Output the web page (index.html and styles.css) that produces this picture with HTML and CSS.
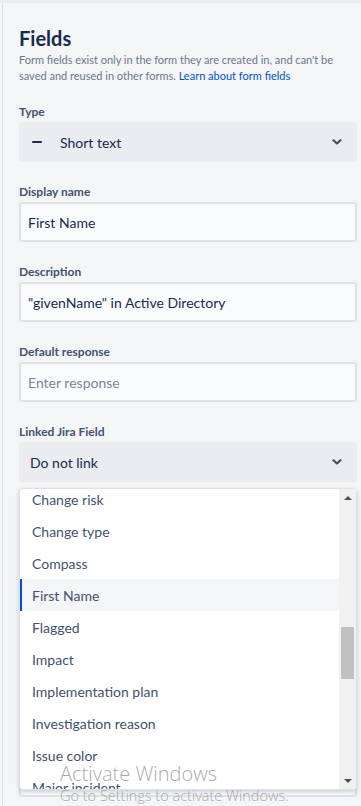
FILE: index.html
```html
<!DOCTYPE html>
<html lang="en">
<head>
<meta charset="utf-8">
<title>Fields</title>
<link rel="stylesheet" href="styles.css">
</head>
<body>
<div class="topbar"></div>
<div class="panel">
  <h1 class="title">Fields</h1>
  <p class="intro">Form fields exist only in the form they are created in, and can't be saved and reused in other forms. <a href="#" class="link">Learn about form fields</a></p>

  <div class="field">
    <div class="label">Type</div>
    <div class="select">
      <span class="minus"></span>
      <span class="select-text type-text">Short text</span>
      <svg class="chev" width="10" height="6" viewBox="0 0 10 6"><path d="M1.5 1.2 L5 4.5 L8.5 1.2" fill="none" stroke="#42526e" stroke-width="2.2" stroke-linecap="round" stroke-linejoin="round"/></svg>
    </div>
  </div>

  <div class="field">
    <div class="label">Display name</div>
    <div class="input">First Name</div>
  </div>

  <div class="field">
    <div class="label">Description</div>
    <div class="input">"givenName" in Active Directory</div>
  </div>

  <div class="field">
    <div class="label">Default response</div>
    <div class="input placeholder">Enter response</div>
  </div>

  <div class="field linked">
    <div class="label">Linked Jira Field</div>
    <div class="select">
      <span class="select-text">Do not link</span>
      <svg class="chev" width="10" height="6" viewBox="0 0 10 6"><path d="M1.5 1.2 L5 4.5 L8.5 1.2" fill="none" stroke="#42526e" stroke-width="2.2" stroke-linecap="round" stroke-linejoin="round"/></svg>
    </div>
    <div class="menu">
      <div class="menu-list">
        <div class="menu-items">
          <div class="item">Change risk</div>
          <div class="item">Change type</div>
          <div class="item">Compass</div>
          <div class="item selected">First Name</div>
          <div class="item">Flagged</div>
          <div class="item">Impact</div>
          <div class="item">Implementation plan</div>
          <div class="item">Investigation reason</div>
          <div class="item">Issue color</div>
          <div class="item">Major incident</div>
        </div>
      </div>
      <div class="scrollbar">
        <div class="arrow up"></div>
        <div class="track"><div class="thumb"></div></div>
        <div class="arrow down"></div>
      </div>
    </div>
  </div>

  <div class="hidden-gap"></div>
  <div class="input behind"></div>
</div>

<div class="watermark">
  <div class="wm-big">Activate Windows</div>
  <div class="wm-small">Go to Settings to activate Windows.</div>
</div>
</body>
</html>
```

FILE: styles.css
```css
html, body {
  margin: 0;
  padding: 0;
  background: #f4f5f7;
  font-family: "Lato", "Noto Sans", sans-serif;
  color: #172b4d;
  overflow: hidden;
  height: 806px;
}

.topbar {
  height: 3px;
  background: #ebecf0;
}

.panel {
  position: relative;
  margin-left: 2px;
  border-left: 1px solid #dfe1e6;
  padding: 23px 4px 0 16px;
  height: 803px;
  box-sizing: border-box;
}

.title {
  margin: 0;
  font-size: 20px;
  line-height: 24px;
  font-weight: 700;
  color: #172b4d;
}

.intro {
  margin: 2px 0 0 0;
  font-size: 11px;
  line-height: 16px;
  color: #6b778c;
}

.link {
  color: #0052cc;
  text-decoration: none;
}

.field {
  margin-top: 18px;
}

.field + .field {
  margin-top: 20px;
}

.label {
  font-size: 12px;
  line-height: 16px;
  padding-top: 2px;
  font-weight: 700;
  color: #42526e;
  margin-bottom: 2px;
}

.select {
  height: 40px;
  background: #ebecf0;
  border-radius: 3px;
  display: flex;
  align-items: center;
  padding: 0 15px 0 11px;
}

.minus {
  width: 10px;
  height: 2.5px;
  background: #172b4d;
  border-radius: 1px;
  margin-left: 2px;
  margin-right: 18px;
}

.select-text {
  flex: 1;
  font-size: 14px;
  color: #172b4d;
}

.chev {
  display: block;
}

.input {
  height: 40px;
  box-sizing: border-box;
  border: 2px solid #dfe1e6;
  border-radius: 3px;
  background: #fafbfc;
  display: flex;
  align-items: center;
  padding: 0 7px;
  font-size: 14px;
  color: #172b4d;
}

.placeholder {
  color: #7a869a;
}

.linked {
  position: relative;
}

.menu {
  position: absolute;
  left: 0;
  right: 0;
  top: 66px;
  height: 300px;
  background: #ffffff;
  border: 1px solid #dfe1e6;
  border-radius: 4px;
  box-shadow: 0 2px 4px rgba(9, 30, 66, 0.2);
  display: flex;
  overflow: hidden;
  z-index: 2;
}

.menu-list {
  flex: 1;
  overflow: hidden;
}

.menu-items {
  margin-top: -6px;
}

.item {
  height: 32px;
  display: flex;
  align-items: center;
  padding-left: 12px;
  font-size: 14px;
  color: #42526e;
  box-sizing: border-box;
}

.item.selected {
  background: #f4f5f7;
  box-shadow: inset 2px 0 0 #0052cc;
}

.scrollbar {
  width: 17px;
  background: #f1f1f1;
  display: flex;
  flex-direction: column;
}

.arrow {
  height: 17px;
  display: flex;
  align-items: center;
  justify-content: center;
}

.arrow.up::before {
  content: "";
  border-left: 4px solid transparent;
  border-right: 4px solid transparent;
  border-bottom: 4px solid #505050;
}

.arrow.down::before {
  content: "";
  border-left: 4px solid transparent;
  border-right: 4px solid transparent;
  border-top: 4px solid #505050;
}

.track {
  flex: 1;
  padding-top: 121px;
  display: flex;
  flex-direction: column;
  align-items: center;
}

.thumb {
  width: 13px;
  height: 52px;
  background: #c1c1c1;
}

.hidden-gap {
  height: 275px;
}

.behind {
  background: #fafbfc;
}

.watermark {
  position: absolute;
  left: 60px;
  top: 761px;
  color: rgba(140, 140, 140, 0.75);
  font-family: "Open Sans", "Noto Sans", sans-serif;
  z-index: 3;
  pointer-events: none;
}

.wm-big {
  font-size: 20px;
  font-weight: 300;
  line-height: 26px;
}

.wm-small {
  font-size: 14.5px;
  font-weight: 300;
  line-height: 18px;
}
```
